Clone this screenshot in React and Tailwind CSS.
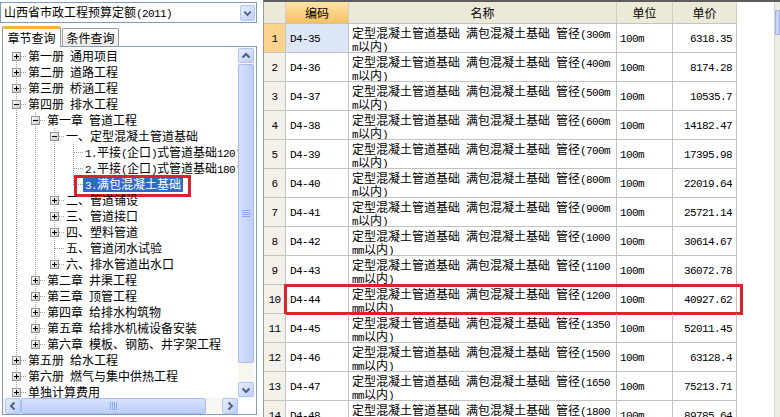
import React from "react";

function Txt({ s }) {
  const parts = s.match(/[\x20-\x7e]+|[^\x20-\x7e]+/g) || [];
  return (
    <>
      {parts.map((p, i) =>
        /^[\x20-\x7e]+$/.test(p) ? (
          <span key={i} className="font-['Liberation_Mono',monospace] text-[11px] tracking-[-0.6px]">
            {p}
          </span>
        ) : (
          <span key={i}>{p}</span>
        )
      )}
    </>
  );
}

const RAW = [
  { t: "第一册 通用项目", lv: 0, box: "+" },
  { t: "第二册 道路工程", lv: 0, box: "+" },
  { t: "第三册 桥涵工程", lv: 0, box: "+" },
  { t: "第四册 排水工程", lv: 0, box: "-" },
  { t: "第一章 管道工程", lv: 1, box: "-" },
  { t: "一、定型混凝土管道基础", lv: 2, box: "-" },
  { t: "1.平接(企口)式管道基础120'", lv: 3 },
  { t: "2.平接(企口)式管道基础180'", lv: 3 },
  { t: "3.满包混凝土基础", lv: 3, sel: true, last: true },
  { t: "二、管道铺设", lv: 2, box: "+" },
  { t: "三、管道接口", lv: 2, box: "+" },
  { t: "四、塑料管道", lv: 2, box: "+" },
  { t: "五、管道闭水试验", lv: 2 },
  { t: "六、排水管道出水口", lv: 2, box: "+", last: true },
  { t: "第二章 井渠工程", lv: 1, box: "+" },
  { t: "第三章 顶管工程", lv: 1, box: "+" },
  { t: "第四章 给排水构筑物", lv: 1, box: "+" },
  { t: "第五章 给排水机械设备安装", lv: 1, box: "+" },
  { t: "第六章 模板、钢筋、井字架工程", lv: 1, box: "+", last: true },
  { t: "第五册 给水工程", lv: 0, box: "+" },
  { t: "第六册 燃气与集中供热工程", lv: 0, box: "+" },
  { t: "单独计算费用", lv: 0, box: "+" },
];

function buildTree() {
  const stack = [];
  return RAW.map((n, i) => {
    const anc = stack.slice(0, n.lv);
    stack[n.lv] = !n.last;
    stack.length = n.lv + 1;
    return { ...n, anc, first: i === 0 };
  });
}

const NODES = buildTree();
const DOT = "#a0a0a0";

function TreeRow({ n }) {
  return (
    <div className="h-[16px] flex items-center relative">
      {n.anc.map((c, i) => (
        <svg key={i} width="19" height="16" className="shrink-0">
          {c && <line x1="9.5" y1="0" x2="9.5" y2="16" stroke={DOT} strokeDasharray="1 1" />}
        </svg>
      ))}
      <svg width="19" height="16" className="shrink-0">
        <line x1="9.5" y1={n.first ? 8 : 0} x2="9.5" y2={n.last ? 9 : 16} stroke={DOT} strokeDasharray="1 1" />
        <line x1="10" y1="8.5" x2="19" y2="8.5" stroke={DOT} strokeDasharray="1 1" />
        {n.box && (
          <>
            <rect x="5.5" y="4.5" width="8" height="8" fill="url(#tbox)" stroke="#8d979b" />
            <line x1="7" y1="8.5" x2="12" y2="8.5" stroke="#000" />
            {n.box === "+" && <line x1="9.5" y1="6" x2="9.5" y2="11" stroke="#000" />}
          </>
        )}
      </svg>
      {n.sel ? (
        <span className="px-[2px] h-[16px] leading-[16px] whitespace-pre bg-[#316ac5] text-white">
          <Txt s={n.t} />
        </span>
      ) : (
        <span className="px-[2px] h-[16px] leading-[16px] whitespace-pre">
          <Txt s={n.t} />
        </span>
      )}
      {n.sel && (
        <div className="absolute left-[67px] top-[-1px] w-[117px] h-[22px] border-[3px] border-[#dc2329]" />
      )}
    </div>
  );
}

function Chevron({ dir }) {
  const paths = {
    up: "M3.5 8.5 L7 5 L10.5 8.5",
    down: "M3.5 5.5 L7 9 L10.5 5.5",
    left: "M8.5 3.5 L5 7 L8.5 10.5",
    right: "M5.5 3.5 L9 7 L5.5 10.5",
  };
  return (
    <svg width="14" height="14" viewBox="0 0 14 14">
      <path d={paths[dir]} fill="none" stroke="#4d6185" strokeWidth="2" />
    </svg>
  );
}

function SBtn({ dir, className }) {
  return (
    <div
      className={
        "shrink-0 flex items-center justify-center rounded-[2px] border border-[#b1c5f3] bg-linear-to-br from-[#e8effd] to-[#bccff7] " +
        className
      }
    >
      <Chevron dir={dir} />
    </div>
  );
}

const ROWS = [
  ["D4-35", "300", "6318.35"],
  ["D4-36", "400", "8174.28"],
  ["D4-37", "500", "10535.7"],
  ["D4-38", "600", "14182.47"],
  ["D4-39", "700", "17395.98"],
  ["D4-40", "800", "22019.64"],
  ["D4-41", "900", "25721.14"],
  ["D4-42", "1000", "30614.67"],
  ["D4-43", "1100", "36072.78"],
  ["D4-44", "1200", "40927.62"],
  ["D4-45", "1350", "52011.45"],
  ["D4-46", "1500", "63128.4"],
  ["D4-47", "1650", "75213.71"],
  ["D4-48", "1800", "89785.64"],
];

function DataRow({ r, i }) {
  const [code, d, price] = r;
  const l1 = "定型混凝土管道基础 满包混凝土基础 管径(" + (d.length === 3 ? d + "m" : d);
  const l2 = d.length === 3 ? "m以内)" : "mm以内)";
  return (
    <div className="flex h-[29px] shrink-0 border-b border-[#c3c3c3] relative">
      {i === 0 ? (
        <div className="w-[22px] shrink-0 border-r border-[#c3c3c3] bg-[#fbd38c] flex items-center justify-center pt-[2px]">
          <Txt s={String(i + 1)} />
        </div>
      ) : (
        <div className="w-[22px] shrink-0 border-r border-[#c3c3c3] bg-[#f3f1e9] flex items-center justify-center pt-[2px]">
          <Txt s={String(i + 1)} />
        </div>
      )}
      {i === 0 ? (
        <div className="w-[63px] shrink-0 border-r border-[#c3c3c3] bg-[#dde7f6] pl-[4px] flex items-center pt-[2px]">
          <Txt s={code} />
        </div>
      ) : (
        <div className="w-[63px] shrink-0 border-r border-[#c3c3c3] pl-[4px] flex items-center pt-[2px]">
          <Txt s={code} />
        </div>
      )}
      <div className="w-[268px] shrink-0 border-r border-[#c3c3c3] pl-[3px] pt-[2px] leading-[13px] whitespace-pre overflow-hidden">
        <div className="h-[13px]">
          <Txt s={l1} />
        </div>
        <div className="h-[13px]">
          <Txt s={l2} />
        </div>
      </div>
      <div className="w-[56px] shrink-0 border-r border-[#c3c3c3] pl-[3px] flex items-center pt-[2px]">
        <Txt s="100m" />
      </div>
      <div className="w-[64px] shrink-0 border-r border-[#c3c3c3] pr-[4px] flex items-center justify-end pt-[2px]">
        <Txt s={price} />
      </div>
      {i === 9 && (
        <div className="absolute left-[20px] top-[-1px] w-[459px] h-[31px] border-[3px] border-[#dc2329]" />
      )}
    </div>
  );
}

export default function App() {
  return (
    <div className="w-[780px] h-[417px] bg-white flex overflow-hidden font-['Noto_Sans_CJK_SC',sans-serif] text-[12px] text-black">
      <svg width="0" height="0" className="absolute">
        <defs>
          <linearGradient id="tbox" x1="0" y1="0" x2="1" y2="1">
            <stop offset="0" stopColor="#ffffff" />
            <stop offset="1" stopColor="#c6c5bb" />
          </linearGradient>
        </defs>
      </svg>

      {/* left column */}
      <div className="w-[257px] shrink-0 flex flex-col">
        <div className="mt-[2px] h-[21px] border border-[#7f9db9] bg-white flex items-center">
          <div className="flex-1 pl-[3px] leading-[14px] whitespace-pre">
            <Txt s="山西省市政工程预算定额(2011)" />
          </div>
          <SBtn dir="down" className="w-[15px] h-[16px] mr-[1px]" />
        </div>

        <div className="h-[23px] flex items-end pl-[2px]">
          <div className="h-[21px] mb-[-1px] w-[59px] relative z-10 bg-white border-x border-[#919b9c] border-t-[3px] border-t-[#f9b43b] rounded-t-[2px] flex items-center justify-center leading-[14px]">
            章节查询
          </div>
          <div className="h-[18px] w-[57px] ml-[1px] border border-b-0 border-[#919b9c] rounded-t-[2px] bg-linear-to-b from-[#ffffff] to-[#ecebe5] flex items-center justify-center leading-[14px] pt-[1px]">
            条件查询
          </div>
        </div>

        <div className="flex-1 ml-[2px] mb-[2px] border border-[#7f9db9] bg-white flex flex-col min-h-0">
          <div className="flex-1 flex min-h-0">
            <div className="flex-1 overflow-hidden pl-[4px] pt-[1px]">
              {NODES.map((n, i) => (
                <TreeRow key={i} n={n} />
              ))}
            </div>
            <div className="w-[16px] mr-[2px] shrink-0 flex flex-col pt-[1px] pb-[1px] bg-[#f7f6f1]">
              <SBtn dir="up" className="h-[15px]" />
              <div className="mt-[1px] h-[299px] rounded-[2px] border border-[#a8bdf0] bg-linear-to-r from-[#d6e2fd] to-[#bccef8] flex items-center justify-center">
                <svg width="8" height="8">
                  {[0, 2, 4, 6].map((y) => (
                    <line key={y} x1="0" y1={y + 0.5} x2="8" y2={y + 0.5} stroke="#8eaaee" />
                  ))}
                </svg>
              </div>
              <div className="flex-1" />
              <SBtn dir="down" className="h-[15px]" />
            </div>
          </div>
          <div className="h-[16px] shrink-0 flex bg-[#f7f6f1]">
            <SBtn dir="left" className="w-[16px] ml-[2px]" />
            <div className="w-[185px] rounded-[2px] border border-[#a8bdf0] bg-linear-to-b from-[#d6e2fd] to-[#bccef8] flex items-center justify-center">
              <svg width="8" height="8">
                {[0, 2, 4, 6].map((x) => (
                  <line key={x} x1={x + 0.5} y1="0" x2={x + 0.5} y2="8" stroke="#8eaaee" />
                ))}
              </svg>
            </div>
            <div className="flex-1" />
            <SBtn dir="right" className="w-[16px]" />
            <div className="w-[18px] bg-white" />
          </div>
        </div>
      </div>

      <div className="w-[6px] shrink-0" />

      {/* right panel */}
      <div className="flex-1 flex border-l border-[#9a9a9a] border-t-2 border-t-[#5d5d5d] min-w-0">
        <div className="w-[473px] shrink-0 flex flex-col">
          <div className="flex h-[22px] shrink-0 bg-[#ece9d9] border-b border-[#c3c3c3]">
            <div className="w-[22px] shrink-0 border-r border-[#d2cebf]" />
            <div className="w-[63px] shrink-0 border-r border-[#d2cebf] bg-linear-to-b from-[#fde3a4] to-[#f5c062] flex items-center justify-center">
              编码
            </div>
            <div className="w-[268px] shrink-0 border-r border-[#d2cebf] flex items-center justify-center">
              名称
            </div>
            <div className="w-[56px] shrink-0 border-r border-[#d2cebf] flex items-center justify-center">
              单位
            </div>
            <div className="w-[64px] shrink-0 border-r border-[#d2cebf] flex items-center justify-center">
              单价
            </div>
          </div>
          {ROWS.map((r, i) => (
            <DataRow key={i} r={r} i={i} />
          ))}
        </div>
        <div className="flex-1 bg-white" />
        <div className="w-[6px] shrink-0 bg-[#ecebe6] border-l border-[#d6d6d0] pt-[8px]">
          <div className="h-[25px] bg-[#c4d3f6] border border-[#9fb5e6]" />
        </div>
      </div>
    </div>
  );
}
